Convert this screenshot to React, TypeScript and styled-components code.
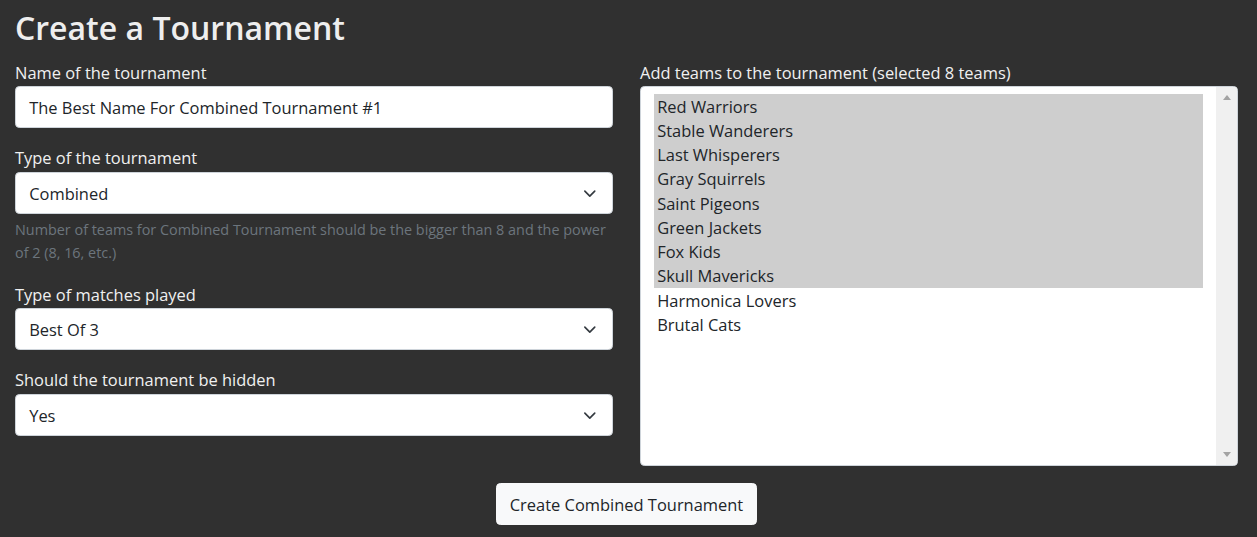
import React from "react";
import styled, { createGlobalStyle } from "styled-components";

const FONT = `"Open Sans", "Noto Sans", Arial, sans-serif`;

const Global = createGlobalStyle`
  html, body { margin: 0; padding: 0; background: #303030; }
  body { font-family: ${FONT}; color: #f0f0f0; }
  * { box-sizing: border-box; }
`;

const Page = styled.div`
  padding: 6.5px 19px 0 15px;
  width: 1257px;
  height: 537px;
  overflow: hidden;
`;

const Title = styled.h2`
  margin: 0 0 10.8px;
  font-size: 32px;
  line-height: 42.2px;
  font-weight: 600;
  color: #eeeeee;
`;

const Columns = styled.div`
  display: grid;
  grid-template-columns: 598px 598px;
  column-gap: 27px;
`;

const Column = styled.div`
  display: flex;
  flex-direction: column;
`;

const Group = styled.div`
  display: flex;
  flex-direction: column;
  margin-bottom: 17.4px;
`;

const Label = styled.label`
  font-size: 16.45px;
  line-height: 26.4px;
  color: #f0f0f0;
`;

const Control = styled.div`
  height: 42px;
  background: #fff;
  border: 1px solid #ced4da;
  border-radius: 4.4px;
  padding: 1px 13.2px 0;
  display: flex;
  align-items: center;
  justify-content: space-between;
  font-size: 16.45px;
  color: #212529;
`;

const Chevron = styled.svg`
  width: 17.6px;
  height: 13.2px;
  flex: none;
`;

const Help = styled.div`
  margin-top: 4.4px;
  font-size: 14.4px;
  line-height: 23.1px;
  color: #6c757d;
`;

const ListBox = styled.div`
  height: 380px;
  background: #fff;
  border: 1px solid #ced4da;
  border-radius: 4.4px;
  display: flex;
  overflow: hidden;
`;

const Options = styled.div`
  flex: 1;
  padding: 6.6px 13.2px;
`;

const Option = styled.div<{ $selected?: boolean }>`
  height: 24.25px;
  line-height: 24.25px;
  padding: 1px 3px 0;
  font-size: 16.45px;
  color: #212529;
  background: ${(p) => (p.$selected ? "#cecece" : "transparent")};
  white-space: nowrap;
`;

const Scrollbar = styled.div`
  width: 21px;
  background: #f0f0f0;
  display: flex;
  flex-direction: column;
  justify-content: space-between;
  align-items: center;
  padding: 8px 0;
`;

const Arrow = styled.div<{ $down?: boolean }>`
  width: 0;
  height: 0;
  border-left: 4.5px solid transparent;
  border-right: 4.5px solid transparent;
  ${(p) =>
    p.$down
      ? "border-top: 5px solid #a3a3a3;"
      : "border-bottom: 5px solid #a3a3a3;"}
`;

const Footer = styled.div`
  display: flex;
  justify-content: center;
  padding-top: 17px;
`;

const Button = styled.button`
  height: 42px;
  padding: 1px 13.2px 0;
  background: #f8f9fa;
  border: 1px solid #f8f9fa;
  border-radius: 4.4px;
  font-family: ${FONT};
  font-size: 16.45px;
  color: #212529;
`;

const ChevronIcon = () => (
  <Chevron viewBox="0 0 16 16">
    <path
      d="m2 5 6 6 6-6"
      fill="none"
      stroke="#343a40"
      strokeWidth="2"
      strokeLinecap="round"
      strokeLinejoin="round"
    />
  </Chevron>
);

const teams = [
  { name: "Red Warriors", selected: true },
  { name: "Stable Wanderers", selected: true },
  { name: "Last Whisperers", selected: true },
  { name: "Gray Squirrels", selected: true },
  { name: "Saint Pigeons", selected: true },
  { name: "Green Jackets", selected: true },
  { name: "Fox Kids", selected: true },
  { name: "Skull Mavericks", selected: true },
  { name: "Harmonica Lovers", selected: false },
  { name: "Brutal Cats", selected: false },
];

export default function App() {
  return (
    <Page>
      <Global />
      <Title>Create a Tournament</Title>
      <Columns>
        <Column>
          <Group>
            <Label>Name of the tournament</Label>
            <Control>The Best Name For Combined Tournament #1</Control>
          </Group>
          <Group>
            <Label>Type of the tournament</Label>
            <Control>
              Combined
              <ChevronIcon />
            </Control>
            <Help>
              Number of teams for Combined Tournament should be the bigger than 8 and the power of 2 (8, 16, etc.)
            </Help>
          </Group>
          <Group>
            <Label>Type of matches played</Label>
            <Control>
              Best Of 3
              <ChevronIcon />
            </Control>
          </Group>
          <Group>
            <Label>Should the tournament be hidden</Label>
            <Control>
              Yes
              <ChevronIcon />
            </Control>
          </Group>
        </Column>
        <Column>
          <Label>Add teams to the tournament (selected 8 teams)</Label>
          <ListBox>
            <Options>
              {teams.map((t) => (
                <Option key={t.name} $selected={t.selected}>
                  {t.name}
                </Option>
              ))}
            </Options>
            <Scrollbar>
              <Arrow />
              <Arrow $down />
            </Scrollbar>
          </ListBox>
        </Column>
      </Columns>
      <Footer>
        <Button>Create Combined Tournament</Button>
      </Footer>
    </Page>
  );
}
